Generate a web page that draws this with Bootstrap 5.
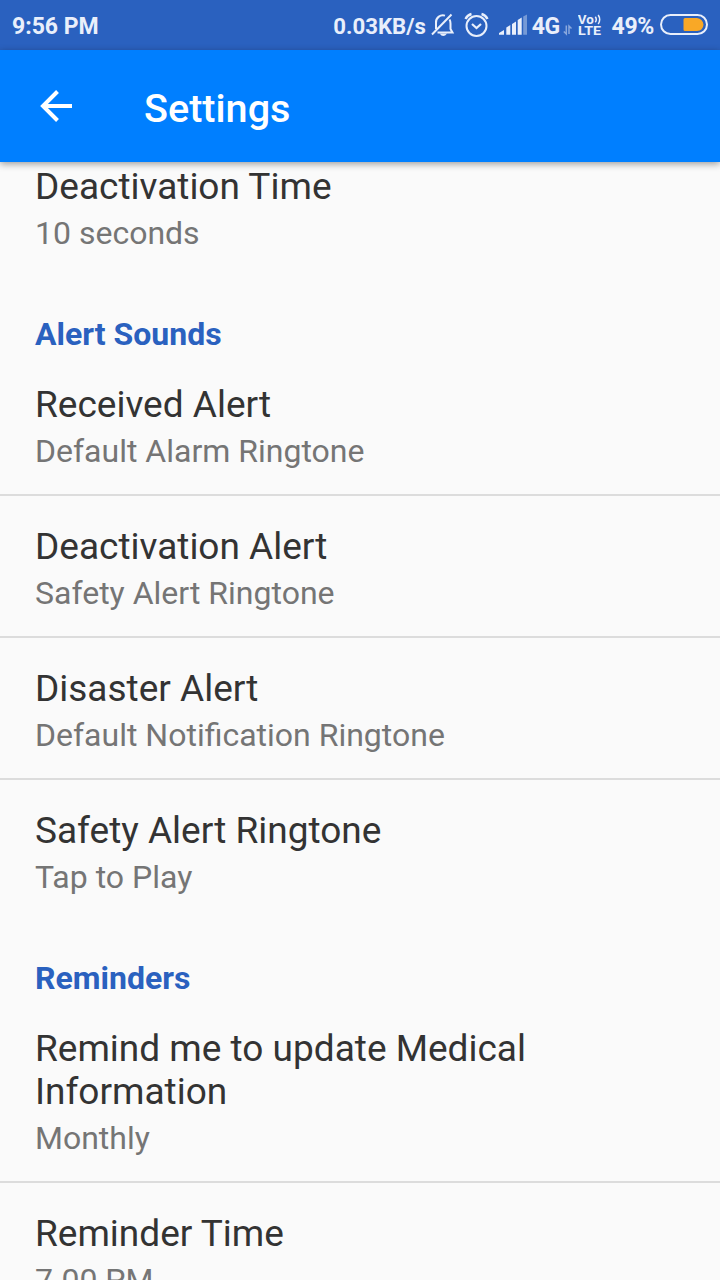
<!DOCTYPE html>
<html lang="en">
<head>
<meta charset="utf-8">
<meta name="viewport" content="width=device-width, initial-scale=1">
<title>Settings</title>
<link href="https://cdn.jsdelivr.net/npm/bootstrap@5.3.0/dist/css/bootstrap.min.css" rel="stylesheet">
<style>
  body { font-family: Roboto, "Liberation Sans", sans-serif; background: #fafafa; color: #333; height: 1280px; }
  .status-bar { height: 50px; background: #2a61bf; color: #e9effb; font-size: 23px; font-weight: 700; line-height: 28px; padding: 2px 12px 0; white-space: nowrap; }
  .status-bar svg { display: block; flex: none; }
  .status-bar span { padding-top: 2px; }
  .status-bar .speed { font-size: 22.2px; padding-top: 0; }
  .status-bar .network { letter-spacing: -.6px; }
  .app-bar { height: 112px; background: #007fff; padding: 0 40px; box-shadow: 0 2px 7px rgba(0,0,0,.38); z-index: 1; }
  .app-bar h1 { font-size: 39.6px; font-weight: 500; line-height: 48px; margin: 6px 0 0 72px; }
  .settings-list { margin-top: 3px; }
  .settings-list > .setting { padding: 29px 36px 24px 35px; border: 0; border-bottom: 2px solid #dcdcdc; background: transparent; }
  .settings-list > .section-end { border-bottom: 0; }
  .settings-list > .cut { padding-top: 0; }
  .setting-name { font-size: 37px; line-height: 43px; color: #333; }
  .setting-value { font-size: 32px; line-height: 38px; color: #757575; margin-top: 6px; }
  .section-title { font-size: 32px; font-weight: 700; line-height: 38px; color: #2a61bf; margin: 0; padding: 39px 35px 1px; }
</style>
</head>
<body class="d-flex flex-column overflow-hidden">
<div class="status-bar d-flex align-items-center flex-shrink-0">
  <span>9:56 PM</span>
  <span class="speed ms-auto">0.03KB/s</span>
  <svg style="margin-left:4px" width="26" height="28" viewBox="431 12 26 28" fill="none" stroke="#e9effb" stroke-width="2">
    <path d="M437 29V23a7 7 0 0 1 9-7.400M450.500 19.500q1 1.600 1 4v5.500l2 3.500H438.500M433 34.500 452.500 14.500"/>
    <path d="M440.500 33.500h7.500q-3.750 5-7.500 0z" fill="#e9effb" stroke="none"/>
  </svg>
  <svg style="margin-left:8px" width="26" height="28" viewBox="465 12 26 28" fill="none" stroke="#e9effb" stroke-width="2">
    <circle cx="477.500" cy="26" r="10"/>
    <path d="M473 24l4.500 4 4.500-4" stroke-width="2.200"/>
    <path d="M466.500 19q2-4 6-5M488.500 19q-2-4-6-5" stroke-width="2.400"/>
  </svg>
  <svg style="margin-left:9px" width="28" height="28" viewBox="500 12 28 28" fill="#e9effb">
    <path d="M500 34.700v-1.700l5-3v4.700zM507.300 34.700v-7.200l4-2.500v9.700zM513 34.700V24l4-2.500v13.200zM518.700 34.700V20l4-2.500v17.200z"/>
    <path d="M524.200 34.700V16.500l3.800-2v20.200z" opacity=".4"/>
  </svg>
  <span class="network" style="margin-left:5px">4G</span>
  <svg style="margin-left:3px" width="10" height="28" viewBox="563 12 10 28" fill="none" stroke="#e9effb" stroke-width="1.500" opacity=".5">
    <path d="M566.300 25.500v8.500l-2.500-2.500M569 34v-8l2.500 2.500"/>
  </svg>
  <svg style="margin-left:5px" width="24" height="28" viewBox="578 12 24 28" fill="#e9effb" font-family="Roboto, sans-serif" font-weight="700">
    <text x="577.800" y="23.500" font-size="12.500" textLength="16" lengthAdjust="spacingAndGlyphs">Vo</text>
    <path d="M595.300 16.800q2 2.700 0 5.400M598.200 15q3 4.500 0 9" fill="none" stroke="#e9effb" stroke-width="1.500"/>
    <text x="578" y="35" font-size="13" textLength="23" lengthAdjust="spacingAndGlyphs">LTE</text>
  </svg>
  <span style="margin-left:10px;letter-spacing:-.3px">49%</span>
  <svg style="margin-left:6px" width="48" height="28" viewBox="660 12 48 28">
    <rect x="661" y="15" width="46" height="19" rx="9.500" fill="none" stroke="#e9effb" stroke-width="2"/>
    <path d="M685 18h12q6 1 6.500 6.700-.5 5.700-6.500 6.300h-12q-1.500 0-1.500-1.500v-10q0-1.500 1.500-1.500z" fill="#f9a826"/>
  </svg>
</div>
<header class="app-bar navbar flex-nowrap justify-content-start flex-shrink-0 position-relative text-white">
  <svg width="32" height="32" viewBox="0 0 32 32" fill="none" stroke="#fff" stroke-width="4" aria-label="Back"><path d="M32 16H4M17.500 1.500 3 16l14.500 14.500"/></svg>
  <h1>Settings</h1>
</header>
<main class="settings-list list-group list-group-flush">
  <div class="setting cut section-end list-group-item"><div class="setting-name">Deactivation Time</div><div class="setting-value">10 seconds</div></div>
  <h2 class="section-title">Alert Sounds</h2>
  <div class="setting list-group-item"><div class="setting-name">Received Alert</div><div class="setting-value">Default Alarm Ringtone</div></div>
  <div class="setting list-group-item"><div class="setting-name">Deactivation Alert</div><div class="setting-value">Safety Alert Ringtone</div></div>
  <div class="setting list-group-item"><div class="setting-name">Disaster Alert</div><div class="setting-value">Default Notification Ringtone</div></div>
  <div class="setting section-end list-group-item"><div class="setting-name">Safety Alert Ringtone</div><div class="setting-value">Tap to Play</div></div>
  <h2 class="section-title">Reminders</h2>
  <div class="setting list-group-item"><div class="setting-name">Remind me to update Medical Information</div><div class="setting-value">Monthly</div></div>
  <div class="setting section-end list-group-item"><div class="setting-name">Reminder Time</div><div class="setting-value">7.00 PM</div></div>
</main>
<script src="https://cdn.jsdelivr.net/npm/bootstrap@5.3.0/dist/js/bootstrap.bundle.min.js"></script>
</body>
</html>
